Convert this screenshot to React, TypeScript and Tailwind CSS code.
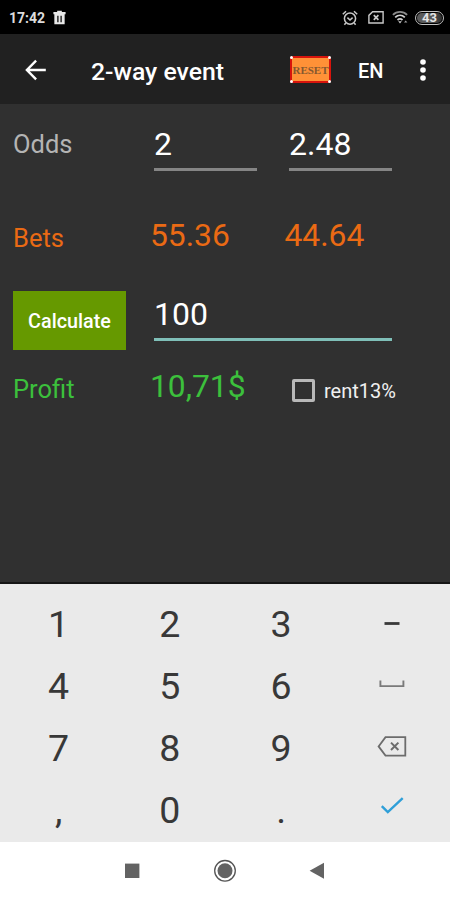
import { ReactNode, useState } from "react";
import { clsx } from "clsx";

function StatusBar() {
  return (
    <div className="h-[34px] bg-black flex items-center pl-[9px] pr-[6px] text-[#dcdcdc]">
      <span className="text-[14px] leading-[34px] font-bold w-[44px] pt-px">17:42</span>
      <svg width="13" height="15" viewBox="0 0 13 16">
        <path d="M4 2V.8h5V2h4v2.4H0V2z" fill="#e8e8e8" />
        <path d="M1 4h11v11.2H1z" fill="#e8e8e8" />
        <path d="M4.8 6v7M8.2 6v7" stroke="#000" strokeWidth="1.3" />
      </svg>
      <div className="ml-auto flex items-center pt-px">
        <svg width="16" height="16" viewBox="0 0 16 16" fill="none" stroke="#c8c8c8" strokeWidth="1.5">
          <circle cx="8" cy="8.6" r="5.6" />
          <path d="M.8 4.2L4 1.2M15.2 4.2L12 1.2M5.4 7.6L8 10l2.6-2.4M3.8 13L2.4 14.8M12.2 13l1.4 1.8" />
        </svg>
        <svg width="16" height="13" viewBox="0 0 16 13" fill="none" stroke="#c8c8c8" strokeWidth="1.4" className="ml-[10px]">
          <path d="M4.6.8h10.5v11.2H.9V4.4z" />
          <path d="M5.8 4.2l4.6 4.6M10.4 4.2L5.8 8.8" strokeWidth="1.7" />
        </svg>
        <svg width="17" height="15" viewBox="0 0 17 15" fill="none" stroke="#d0d0d0" strokeWidth="1.8" className="ml-[8px]">
          <path d="M.9 4.8c4-4 10.2-4 14.2 0" stroke="#8c8c8c" />
          <path d="M3.2 7.4c2.8-2.6 6.8-2.6 9.6 0M5.5 10c1.5-1.4 3.5-1.4 5 0" />
          <path d="M6.2 11.2h3.6L8 13.6z" fill="#d0d0d0" stroke="none" />
          <path d="M12 12.4l1.7-2 1.7 2z" fill="#a0a0a0" stroke="none" />
        </svg>
        <div className="ml-[6px] w-[29px] h-[14px] rounded-full border-[1.5px] border-[#c0c0c0] p-px">
          <div className="h-full rounded-full bg-linear-to-r from-[#5a5a5a] from-50% to-[#303030] flex items-center justify-center text-[13px] leading-none font-bold text-[#e4e4e4]">
            43
          </div>
        </div>
      </div>
    </div>
  );
}

function AppBar({ onReset }: { onReset: () => void }) {
  return (
    <div className="h-[70px] bg-[#212121] flex items-center text-white">
      <button className="ml-[25px] w-[66px] pt-[2px]">
        <svg width="22" height="22" viewBox="0 0 22 22" fill="none" stroke="#fff" strokeWidth="2.4">
          <path d="M20.8 11H2.5M11.1 1.7L1.9 11l9.2 9.3" />
        </svg>
      </button>
      <h1 className="text-[24.8px] leading-[40px] font-medium w-[199px] pt-[5px] whitespace-nowrap">2-way event</h1>
      <button onClick={onReset} className="relative w-[41px] h-[27px] mt-px bg-[#ff9137] border-2 border-[#d8140c] rounded-[3px] flex items-center justify-center">
        <span className="font-['Liberation_Serif',serif] font-bold text-[11px] leading-none pt-px text-[#86582f]">RESET</span>
        <span className="absolute -top-[2px] -left-[2px] w-[3px] h-[3px] rounded-full bg-white" />
        <span className="absolute -top-[2px] -right-[2px] w-[3px] h-[3px] rounded-full bg-white" />
        <span className="absolute -bottom-[2px] -left-[2px] w-[3px] h-[3px] rounded-full bg-white" />
        <span className="absolute -bottom-[2px] -right-[2px] w-[3px] h-[3px] rounded-full bg-white" />
      </button>
      <span className="ml-[27px] w-[62px] text-[20px] leading-[40px] font-medium pt-[3px]">EN</span>
      <svg width="6" height="22" viewBox="0 0 6 22" fill="#fff" className="mt-[2px]">
        <circle cx="3" cy="3" r="2.8" />
        <circle cx="3" cy="11" r="2.8" />
        <circle cx="3" cy="19" r="2.8" />
      </svg>
    </div>
  );
}

interface FieldProps {
  value: string;
  active?: boolean;
  className?: string;
  onChange: (value: string) => void;
}

function Field({ value, active, className, onChange }: FieldProps) {
  return (
    <input
      value={value}
      onChange={(e) => onChange(e.target.value)}
      className={clsx(
        "block h-[47px] pb-1 text-[32px] leading-[40px] text-white border-b-3 focus:outline-none",
        active ? "border-[#7fbfb8]" : "border-[#858585]",
        className
      )}
    />
  );
}

const keys: { id: string; icon?: ReactNode }[] = [
  { id: "1" },
  { id: "2" },
  { id: "3" },
  {
    id: "minus",
    icon: (
      <svg width="30" height="24" viewBox="0 0 30 24">
        <path d="M7.5 11.5h15" stroke="#3a3a3a" strokeWidth="2.8" />
      </svg>
    ),
  },
  { id: "4" },
  { id: "5" },
  { id: "6" },
  {
    id: "space",
    icon: (
      <svg width="30" height="24" viewBox="0 0 30 24" fill="none" stroke="#7a7a7a" strokeWidth="1.9">
        <path d="M3.4 6.6v5.5h23V6.6" />
      </svg>
    ),
  },
  { id: "7" },
  { id: "8" },
  { id: "9" },
  {
    id: "backspace",
    icon: (
      <svg width="30" height="24" viewBox="0 0 30 24" fill="none" stroke="#6c6c6c" strokeWidth="1.8">
        <path d="M8.5 1.2h19.8v18.4H8.5L1.6 10.4z" />
        <path d="M14 6.6l7.4 7.4M21.4 6.6L14 14" strokeWidth="2" />
      </svg>
    ),
  },
  { id: "," },
  { id: "0" },
  { id: "." },
  {
    id: "done",
    icon: (
      <svg width="30" height="24" viewBox="0 0 30 24" fill="none" stroke="#2f9fd8" strokeWidth="2.4">
        <path d="M4.8 8.2l6 5.9L25.7.2" />
      </svg>
    ),
  },
];

function Keypad({ onKey }: { onKey: (id: string) => void }) {
  return (
    <div className="h-[260px] bg-[#eaeaea] border-t-2 border-[#161616] pt-[9px] pl-[3px] pr-[2px] grid grid-cols-4 auto-rows-[62px]">
      {keys.map((k) => (
        <button
          key={k.id}
          onClick={() => onKey(k.id)}
          className="flex items-center justify-center text-[37.5px] leading-[62px] text-[#383838] [&_svg]:overflow-visible"
        >
          {k.icon ?? k.id}
        </button>
      ))}
    </div>
  );
}

function NavBar() {
  return (
    <div className="h-[58px] bg-white flex items-center justify-center">
      <svg width="200" height="24" viewBox="0 0 200 24" fill="#636363">
        <path d="M0 4.6h14.4V19H0z" />
        <circle cx="100" cy="11.8" r="10.3" fill="none" stroke="#555" strokeWidth="1.3" />
        <circle cx="100" cy="11.8" r="7.5" />
        <path d="M199 3.8v16L184.6 11.8z" />
      </svg>
    </div>
  );
}

export default function App() {
  const [odds, setOdds] = useState(["2", "2.48"]);
  const [total, setTotal] = useState("100");
  const [rent, setRent] = useState(false);

  const handleKey = (id: string) => {
    if (id === "backspace") setTotal(total.slice(0, -1));
    else if (/^[0-9.,]$/.test(id)) setTotal(total + id);
  };

  const handleReset = () => {
    setOdds(["", ""]);
    setTotal("");
  };

  return (
    <div className="w-[450px] h-[900px] flex flex-col overflow-hidden bg-[#303030] font-[Roboto,sans-serif]">
      <StatusBar />
      <AppBar onReset={handleReset} />

      <div className="flex-1 pl-[13px] pt-5 text-[32px] leading-[40px]">
        {/* Odds */}
        <div className="flex h-[91px]">
          <span className="w-[141px] text-[25.5px] text-[#b4b4b4]">Odds</span>
          <Field value={odds[0]} onChange={(v) => setOdds([v, odds[1]])} className="w-[103px] mr-8" />
          <Field value={odds[1]} onChange={(v) => setOdds([odds[0], v])} className="w-[103px]" />
        </div>

        {/* Bets */}
        <div className="flex h-[76px] text-[31.8px] text-[#ea6a14]">
          <span className="w-[137px] pt-[3px] text-[25.5px]">Bets</span>
          <span className="w-[134.5px]">55.36</span>
          <span>44.64</span>
        </div>

        {/* Total stake */}
        <div className="flex h-[75px]">
          <button className="w-[113px] h-[59px] mr-7 bg-[#669900] text-white text-[19.8px] leading-[59px] pt-px font-medium">
            Calculate
          </button>
          <Field value={total} onChange={setTotal} active className="w-[238px] mt-[3px]" />
        </div>

        {/* Profit */}
        <div className="flex text-[31.8px] text-[#3cc03c]">
          <span className="w-[137px] pt-[3px] text-[25.5px]">Profit</span>
          <span className="w-[142px]">10,71$</span>
          <button onClick={() => setRent(!rent)} className="flex items-center h-[48px] text-[20px] text-[#f0f0f0]">
            <span className={clsx("w-[23px] h-[23px] border-[3px] border-[#b8b8b8] rounded-[2px] mr-[9px]", rent && "bg-[#7fbfb8]")} />
            <span className="pt-px">rent13%</span>
          </button>
        </div>
      </div>

      <Keypad onKey={handleKey} />
      <NavBar />
    </div>
  );
}
